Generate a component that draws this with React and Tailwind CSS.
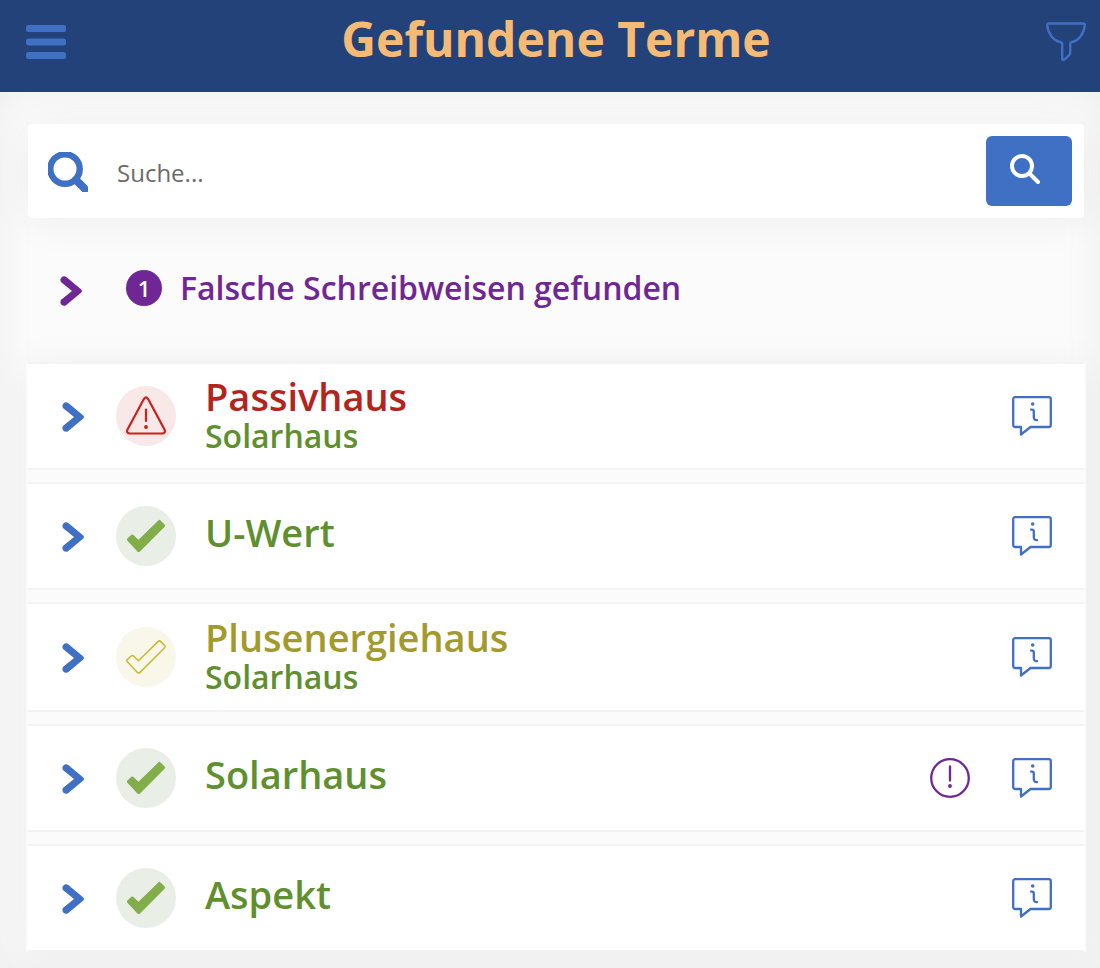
import React, { useState } from "react";

const TERMS = [
  { id: 1, name: "Passivhaus", preferred: "Solarhaus", status: "forbidden" },
  { id: 2, name: "U-Wert", status: "preferred" },
  { id: 3, name: "Plusenergiehaus", preferred: "Solarhaus", status: "allowed" },
  { id: 4, name: "Solarhaus", status: "preferred", hasWarning: true },
  { id: 5, name: "Aspekt", status: "preferred" },
];

const STATUS_STYLES = {
  forbidden: { text: "text-[#b3241c]", badge: "bg-[#f8e8e7] text-[#cc2018]" },
  preferred: { text: "text-[#5f8f2e]", badge: "bg-[#e9eee7] text-[#82ae4a]" },
  allowed: { text: "text-[#a39a2c]", badge: "bg-[#f9f7ea] text-[#c8b92c]" },
};

const CHECK_PATH =
  "M1.6 20.3 5.4 16.8Q6.4 16 7.4 16.9L12.5 21.7 32.3 2.4Q33.4 1.3 34.5 2.4L38.6 6.5Q39.7 7.6 38.6 8.7L14 33.4Q12.7 34.6 11.4 33.4L1.4 22.8Q.2 21.6 1.6 20.3Z";

const MenuIcon = () => (
  <svg viewBox="0 0 40 34" className="h-[34px] w-10" fill="currentColor">
    <rect width="40" height="7" rx="2.5" />
    <rect y="13.5" width="40" height="7" rx="2.5" />
    <rect y="27" width="40" height="7" rx="2.5" />
  </svg>
);

const FunnelIcon = () => (
  <svg viewBox="0 0 40 40" className="h-10 w-10" fill="none" stroke="currentColor" strokeWidth="2.4" strokeLinejoin="round">
    <path d="M2.7 1.5H37.3Q38.8 1.5 38.8 3C38.3 11 33 18.5 26 20Q24.2 20.5 24.2 21.5V31Q24.2 32.1 23.4 32.8L18.7 37.3Q16.3 39 16.2 36.5V21.5Q16.2 20.5 14.2 20C7 18.5 1.7 11 1.2 3Q1.2 1.5 2.7 1.5Z" />
  </svg>
);

const SearchIcon = () => (
  <svg viewBox="0 0 40 40" className="h-10 w-10" fill="none" stroke="currentColor">
    <circle cx="17" cy="17" r="14.7" strokeWidth="6.4" />
    <path d="M28 28 37 37" strokeWidth="8" strokeLinecap="round" />
  </svg>
);

const SmallSearchIcon = () => (
  <svg viewBox="0 0 30 30" className="h-[30px] w-[30px]" fill="none" stroke="currentColor" strokeWidth="4">
    <circle cx="12" cy="12" r="10" />
    <path d="M19.5 19.5 28 28" strokeLinecap="round" />
  </svg>
);

const ChevronIcon = () => (
  <svg viewBox="0 0 22 30" className="h-[30px] w-[22px]" fill="currentColor">
    <path d="M1.2 6.2C-1.4 3.4 2.6-1.6 6 .8L21.3 13.6Q22.6 15 21.3 16.4L6 29.2C2.6 31.6-1.4 26.6 1.2 23.8L12 15Z" />
  </svg>
);

const WarningIcon = () => (
  <svg viewBox="0 0 40 40" className="h-10 w-10" fill="none" stroke="currentColor" strokeWidth="2.2" strokeLinecap="round" strokeLinejoin="round">
    <path d="M18 2.8Q20 0 22 2.8L38.5 33.5Q40 37.3 36 37.5H4Q0 37.3 1.5 33.5Z" />
    <path d="M20 13.5V25" />
    <circle cx="20" cy="31" r="1.2" fill="currentColor" strokeWidth="1.4" />
  </svg>
);

const CheckIcon = ({ outline }) => (
  <svg viewBox="0 0 40 36" className="h-9 w-10">
    {outline ? (
      <path d={CHECK_PATH} fill="none" stroke="currentColor" strokeWidth="1.5" />
    ) : (
      <path d={CHECK_PATH} fill="currentColor" />
    )}
  </svg>
);

const ExclamationIcon = () => (
  <svg viewBox="0 0 40 40" className="h-10 w-10" fill="none" stroke="currentColor" strokeWidth="2.3" strokeLinecap="round">
    <circle cx="20" cy="20" r="18.8" />
    <path d="M20 8.5V22.5" />
    <circle cx="20" cy="28" r="1.2" fill="currentColor" strokeWidth="1.4" />
  </svg>
);

const InfoIcon = () => (
  <svg viewBox="0 0 40 40" className="h-10 w-10" fill="none" stroke="currentColor" strokeWidth="2.3" strokeLinejoin="round" strokeLinecap="round">
    <path d="M3.2 1.2H36.8Q38.8 1.2 38.8 3.2V29Q38.8 31 36.8 31H18.5L9 38.5V31H3.2Q1.2 31 1.2 29V3.2Q1.2 1.2 3.2 1.2Z" />
    <path d="M19 13.6H19.8Q21.8 13.6 21.8 15.5V21Q21.8 24.3 25 24.2" />
    <circle cx="20.7" cy="8" r="1.1" fill="currentColor" strokeWidth="1.4" />
  </svg>
);

const TermRow = ({ term }) => {
  const styles = STATUS_STYLES[term.status];

  return (
    <li
      className={`mx-[2px] flex items-center border-y-2 border-[#f3f3f3] bg-white pl-[34px] pr-8 ${
        term.status === "allowed" ? "min-h-[110px]" : "min-h-[108px]"
      }`}
    >
      <button type="button" aria-label={`${term.name} aufklappen`} className="pt-[2px] text-[#4070c4]">
        <ChevronIcon />
      </button>
      <span className={`ml-8 flex h-[60px] w-[60px] shrink-0 items-center justify-center rounded-full ${styles.badge}`}>
        {term.status === "forbidden" ? <WarningIcon /> : <CheckIcon outline={term.status === "allowed"} />}
      </span>
      <div className={`ml-[29px] flex-1 font-semibold ${term.preferred ? "pb-0" : "pb-2"}`}>
        <h2 className={`text-[38px] leading-10 ${styles.text}`}>{term.name}</h2>
        {term.preferred && <p className="text-[32px] leading-10 text-[#5f8f2e]">{term.preferred}</p>}
      </div>
      <div className="flex items-center gap-[42px]">
        {term.hasWarning && (
          <button type="button" aria-label="Hinweis" className="text-[#6f2795]">
            <ExclamationIcon />
          </button>
        )}
        <button type="button" aria-label="Informationen" className="text-[#4070c4]">
          <InfoIcon />
        </button>
      </div>
    </li>
  );
};

export default function App() {
  const [query, setQuery] = useState("");

  return (
    <div className="flex min-h-screen flex-col bg-[#fbfbfb] font-['Open_Sans','Noto_Sans',sans-serif]">
      {/* Header */}
      <header className="flex h-[92px] items-center justify-between bg-[#24427a] pb-2 pl-[26px] pr-[14px] text-[#4070c4]">
        <button type="button" aria-label="Menü">
          <MenuIcon />
        </button>
        <h1 className="pb-[6px] text-5xl font-bold text-[#f5bb75]">Gefundene Terme</h1>
        <button type="button" aria-label="Filter">
          <FunnelIcon />
        </button>
      </header>

      <main className="flex-1 pb-4 pl-[26px] pr-[14px] pt-8 shadow-[inset_0_0_40px_rgba(0,0,0,0.06)]">
        {/* Search */}
        <form
          role="search"
          onSubmit={(e) => e.preventDefault()}
          className="mx-[2px] flex h-[94px] items-center rounded-sm bg-white pl-5 pr-3 shadow-[0_4px_40px_rgba(0,0,0,0.06)]"
        >
          <label htmlFor="term-search" aria-label="Suche" className="pt-[2px] text-[#4070c4]">
            <SearchIcon />
          </label>
          <input
            id="term-search"
            type="text"
            placeholder="Suche..."
            value={query}
            onChange={(e) => setQuery(e.target.value)}
            className="ml-[29px] h-12 min-w-0 flex-1 bg-transparent pt-[2px] text-2xl text-[#555] outline-none placeholder:text-[#6b6b6b]"
          />
          <button
            type="submit"
            aria-label="Suchen"
            className="flex h-[70px] w-[86px] items-center justify-center rounded-md bg-[#4070c4] pb-1 pr-2 text-white"
          >
            <SmallSearchIcon />
          </button>
        </form>

        {/* Misspellings */}
        <button type="button" className="flex h-36 w-full items-center pl-[34px] text-left font-semibold text-[#6f2795]">
          <span className="pt-[2px]">
            <ChevronIcon />
          </span>
          <span className="flex items-center pb-1">
            <span className="ml-11 flex h-9 w-9 items-center justify-center rounded-full bg-[#6f2795] text-[22px] text-white">1</span>
            <span className="ml-[18px] text-[32px] leading-10">Falsche Schreibweisen gefunden</span>
          </span>
        </button>

        {/* Found terms */}
        <ul className="flex flex-col gap-3 bg-[#fbfbfb] shadow-[0_4px_40px_rgba(0,0,0,0.06)]">
          {TERMS.map((term) => (
            <TermRow key={term.id} term={term} />
          ))}
        </ul>
      </main>
    </div>
  );
}
